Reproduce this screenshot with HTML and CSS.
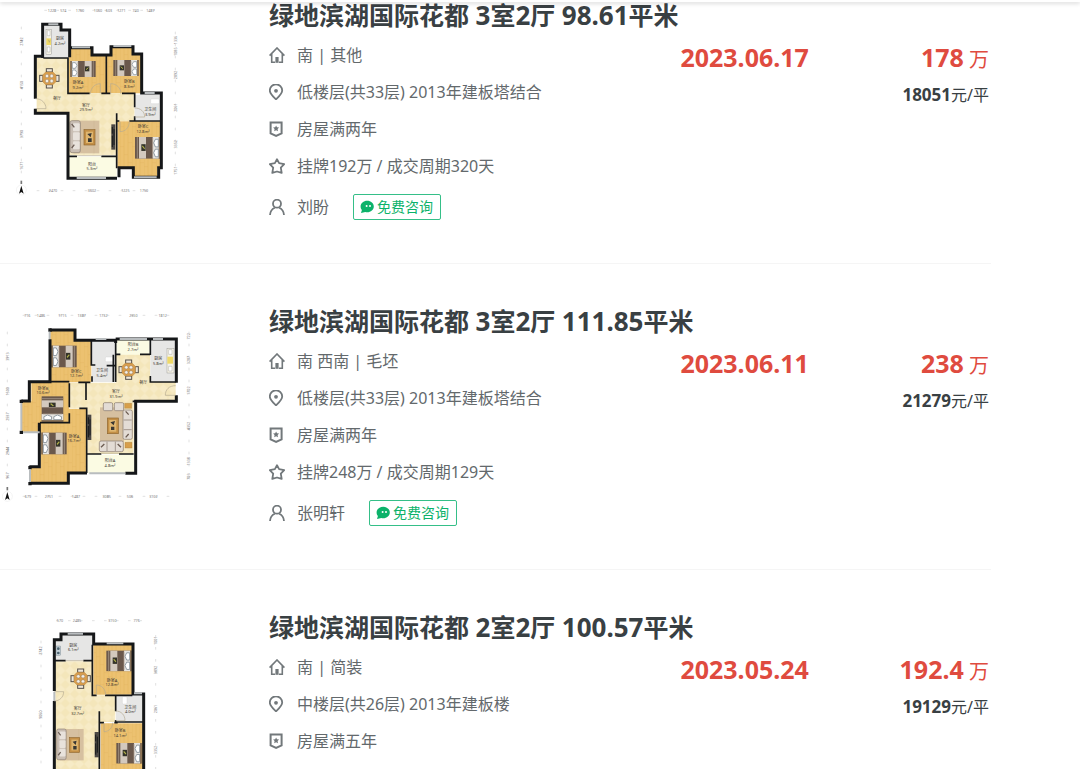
FILE: index.html
```html
<!DOCTYPE html>
<html lang="zh-CN">
<head>
    <meta charset="UTF-8">
    <meta name="viewport" content="width=device-width, initial-scale=1.0">
    <title>绿地滨湖国际花都 成交</title>
    <link rel="stylesheet" href="styles.css">
</head>
<body>
    <!-- Shared icons and furniture -->
    <svg class="defs" width="0" height="0" aria-hidden="true">
        <defs>
            <symbol id="i-house" viewBox="0 0 16 16">
                <path d="M.6 8.6 8 1l7.400 7.600M2.700 7v8.200h3.300M13.300 7v8.200H10" fill="none" stroke="currentColor" stroke-width="1.600"/>
                <path d="M6.400 10h3.200v5.800H6.400z" fill="currentColor"/>
            </symbol>
            <symbol id="i-pin" viewBox="0 0 16 16">
                <path d="M7 15.400C4 12.500.8 9.600.8 6.500a6.200 6.200 0 0 1 12.400 0C13.200 9.600 10 12.500 7 15.400z" fill="none" stroke="currentColor" stroke-width="1.800"/>
                <circle cx="7" cy="6.800" r="1.900" fill="currentColor"/>
            </symbol>
            <symbol id="i-badge" viewBox="0 0 16 16">
                <path d="M1.600 1.500h11v10.800l-5.500 2.500-5.500-2.500z" fill="none" stroke="currentColor" stroke-width="2"/>
                <path d="m7.100 4.400.9 1.900 2.100.3-1.500 1.500.4 2.100-1.900-1-1.900 1 .4-2.100-1.500-1.500 2.100-.3z" fill="currentColor"/>
            </symbol>
            <symbol id="i-star" viewBox="0 0 16 16">
                <path d="m8 1.200 2.100 4 5.100.9-3.400 3.600.9 5.200L8 13.500l-4.700 1.400.9-5.200L.8 6.100l5.100-.9z" fill="none" stroke="currentColor" stroke-width="1.800" stroke-linejoin="round"/>
            </symbol>
            <symbol id="i-person" viewBox="0 0 16 16">
                <circle cx="8" cy="4.700" r="4" fill="none" stroke="currentColor" stroke-width="1.800"/>
                <path d="M1 16c.2-3.600 2-6 4.800-7.300M15 16c-.2-3.600-2-6-4.800-7.300" fill="none" stroke="currentColor" stroke-width="1.800"/>
            </symbol>
            <symbol id="i-chat" viewBox="0 0 14 14">
                <path d="M7.200.7c3.700 0 6.600 2.500 6.600 5.700s-2.900 5.800-6.600 5.800c-.7 0-1.300-.1-1.900-.2L1 12.900l.9-3C1.100 9 .6 7.800.6 6.400.6 3.200 3.500.7 7.200.7z" fill="currentColor"/>
                <circle cx="6.600" cy="6.100" r="1" fill="#fff"/>
                <circle cx="10" cy="6.100" r="1" fill="#fff"/>
            </symbol>

            <pattern id="wood" width="36" height="60" patternUnits="userSpaceOnUse">
                <rect width="36" height="60" fill="#ecc170"/>
                <path d="M0 0v60M12 0v60M24 0v60" stroke="#e6b661" stroke-width="2"/>
                <path d="M0 20h12M12 44h12M24 8h12" stroke="#e2b05a"/>
            </pattern>
            <pattern id="tile" width="28" height="28" patternUnits="userSpaceOnUse">
                <rect width="28" height="28" fill="#f4e6ba"/>
                <path d="M0 14 14 0l14 14-14 14z" fill="#f7ebc6"/>
            </pattern>
            <g id="bed">
                <rect width="76" height="48" fill="#6a584c"/>
                <rect width="5" height="48" fill="#8b7358"/>
                <rect x="5" width="18" height="48" fill="#e6e4e0"/>
                <path d="M6 5h9l5 8-5 9H6zM6 27h9l5 8-5 9H6z" fill="#fff" stroke="#77838c" stroke-width="2"/>
                <rect x="43" width="21" height="48" fill="#d3c9be"/>
                <path d="M23 2v44M69 0v48" stroke="#a8988a" stroke-width="2"/>
                <rect x="44" y="16" width="13" height="15" fill="#34332a"/>
                <path d="m47 26 7-6" stroke="#b3b24a" stroke-width="3"/>
            </g>
            <g id="dining">
                <g fill="#eee7da" stroke="#56504a" stroke-width="3">
                    <rect x="22" y="2" width="18" height="10"/>
                    <rect x="22" y="50" width="18" height="10"/>
                    <rect x="2" y="22" width="10" height="18"/>
                    <rect x="50" y="22" width="10" height="18"/>
                </g>
                <path d="M20 12h22l9 9v20l-9 9H20l-9-9V21z" fill="#d89d4d" stroke="#a97837"/>
                <g fill="#f4efe6" stroke="#77706a">
                    <circle cx="24" cy="24" r="5"/><circle cx="38" cy="24" r="5"/>
                    <circle cx="24" cy="39" r="5"/><circle cx="38" cy="39" r="5"/>
                </g>
            </g>
            <g id="lounge">
                <rect x="10" width="78" height="98" fill="#d6c0a0"/>
                <path d="M26 0v98M72 0v98" stroke="#cab08c"/>
                <rect width="31" height="96" rx="6" fill="#c9beb4" stroke="#8a7b70" stroke-width="2"/>
                <rect x="9" y="8" width="20" height="24" rx="3" fill="#e8e2dc"/>
                <rect x="9" y="35" width="20" height="24" rx="3" fill="#e8e2dc"/>
                <rect x="9" y="62" width="20" height="24" rx="3" fill="#e8e2dc"/>
                <path d="m5 10 8 10M5 82l8-10" stroke="#6f6058" stroke-width="4"/>
                <rect x="42" y="27" width="33" height="46" fill="#c38f46" stroke="#8f6730" stroke-width="2"/>
                <rect x="48" y="33" width="21" height="34" fill="#dfb670"/>
                <path d="m52 40 13-3-3 13zM54 53h11v11H54z" fill="#393733"/>
            </g>
            <g id="tv">
                <rect width="12" height="76" fill="#4b4744"/>
                <path d="M3 8v20M3 34v34M8 14v48" stroke="#17191b" stroke-width="3"/>
            </g>
            <g id="north">
                <circle r="15" fill="#fff" stroke="#ddd"/>
                <path d="M0-13 7 11 0 6-7 11z" fill="#111"/>
                <path d="M0-28v10" stroke="#777" stroke-width="5"/>
            </g>
        </defs>
    </svg>

    <header class="topbar"></header>

    <main class="list">
        <article class="item">
            <a class="plan" href="#" aria-label="户型图">
                <svg viewBox="0 3 600 600">
                    <g fill="url(#wood)">
                        <path d="M206 145h70v22h42v113H206zM332 140h64v22h28v118H320V166h12zM352 364h128v140h-8v28h-76v-28h-44z"/>
                    </g>
                    <path d="M110 174h94v106h146v0h54v83h-52v103H206V336h-96z" fill="url(#tile)"/>
                    <path d="M134 76h46v17h26v79h-72zM404 284h78v77h-78z" fill="#e6e6e5"/>
                    <path d="M206 470h144v60H206z" fill="#fbfbe3"/>
                    <rect x="138" y="88" width="16" height="75" fill="#f5f2e6" stroke="#777"/>
                    <path d="M139 115h14v20h-14z" fill="#efd968"/>
                    <path d="M142 92h8v15h-8zM142 141h8v15h-8z" fill="#fff" stroke="#888"/>
                    <path d="m145 119 3 8 2-6" fill="none" stroke="#777"/>
                    <rect x="452" y="297" width="26" height="14" rx="3" fill="#fff" stroke="#c7c7c7"/>
                    <use href="#dining" x="117" y="204"/>
                    <use href="#bed" x="211" y="183"/>
                    <use href="#bed" transform="matrix(-1 0 0 1 416 180)"/>
                    <use href="#bed" transform="matrix(-1 0 0 1.350 481 411)"/>
                    <use href="#lounge" x="210" y="362"/>
                    <use href="#tv" x="334" y="373"/>
                    <g class="wall">
                        <path d="M128 174V73h55v17h26v82M106 296V169h22M106 326v14h98v195h147M209 143h67v22h57v-25h66v22h26v117h59v224h-8v29h-76v-29h-43v29"/>
                        <path class="thin" d="M130 174h74v106h65M304 280h27M319 165v115M366 280h38v42M404 349v14h76M350 340v165M206 469h25M304 469h46M350 363h8M388 363h18"/>
                    </g>
                    <path class="glass" d="M145 73h30M216 142h54M340 138h54M434 279h30M230 534h88M402 532h68"/>
                    <path class="door" d="M106 296c20 0 32 14 32 30h-32M271 282c1-18 13-31 30-31v29M332 282v-31c18 0 31 13 31 31M404 324c18 0 30 11 30 27h-30M388 365c0 17-12 30-28 30v-30M230 467h74"/>
                    <g class="room">
                        <text x="180" y="120">厨房</text><text x="180" y="134">4.2m²</text>
                        <text x="234" y="253">卧室A</text><text x="234" y="267">9.2m²</text>
                        <text x="388" y="249">卧室B</text><text x="388" y="263">8.3m²</text>
                        <text x="171" y="301">餐厅</text><text x="258" y="320">客厅</text><text x="258" y="334">29.9m²</text>
                        <text x="451" y="334">卫生间</text><text x="451" y="347">3.9m²</text>
                        <text x="429" y="385">卧室C</text><text x="429" y="398">12.8m²</text>
                        <text x="276" y="497">阳台</text><text x="276" y="510">5.3m²</text>
                    </g>
                    <path class="rule" d="M133 31h348M64 80v450M526 95v430M110 572h358"/>
                    <g class="dim">
                        <text x="156" y="35">1228</text><text x="190" y="35">574</text><text x="240" y="35">1760</text><text x="294" y="35">1060</text><text x="327" y="35">603</text><text x="364" y="35">1271</text><text x="407" y="35">740</text><text x="451" y="35">1487</text>
                        <text x="159" y="576">2470</text><text x="276" y="576">3602</text><text x="376" y="576">1225</text><text x="432" y="576">1750</text>
                        <text transform="translate(68 125) rotate(-90)">2742</text><text transform="translate(68 255) rotate(-90)">4150</text><text transform="translate(68 402) rotate(-90)">3790</text><text transform="translate(68 497) rotate(-90)">1671</text>
                        <text transform="translate(530 120) rotate(-90)">1336</text><text transform="translate(530 155) rotate(-90)">1085</text><text transform="translate(530 225) rotate(-90)">2892</text><text transform="translate(530 323) rotate(-90)">2061</text><text transform="translate(530 433) rotate(-90)">3352</text><text transform="translate(530 512) rotate(-90)">1751</text>
                    </g>
                    <use href="#north" x="64" y="570"/>
                </svg>
            </a>
            <div class="content">
                <h2><a href="#">绿地滨湖国际花都 <b>3</b>室<b>2</b>厅 <b>98.61</b>平米</a></h2>
                <div class="details">
                    <div class="info">
                        <p><svg class="icon"><use href="#i-house"/></svg>南 | 其他</p>
                        <p><svg class="icon"><use href="#i-pin"/></svg>低楼层(共33层) 2013年建板塔结合</p>
                        <p><svg class="icon"><use href="#i-badge"/></svg>房屋满两年</p>
                        <p><svg class="icon"><use href="#i-star"/></svg>挂牌192万 / 成交周期320天</p>
                        <div class="agent">
                            <svg class="icon"><use href="#i-person"/></svg><a href="#">刘盼</a>
                            <button type="button"><svg><use href="#i-chat"/></svg>免费咨询</button>
                        </div>
                    </div>
                    <div class="deal">
                        <div class="date">2023.06.17</div>
                        <div class="price">
                            <div class="total"><b>178</b> 万</div>
                            <div class="unit"><b>18051</b>元/平</div>
                        </div>
                    </div>
                </div>
            </div>
        </article>

        <article class="item">
            <a class="plan" href="#" aria-label="户型图">
                <svg viewBox="0 21 600 600">
                    <path d="M150 90h74v32h50v125h-66v80h50v190h-52v33H90v-46h32V396H64v-92h30v-58h58z" fill="url(#wood)"/>
                    <path d="M348 162h103v83h76v59H401v158H262V326h-52v-78h138z" fill="url(#tile)"/>
                    <path d="M276 120h70v126h-70zM451 120h76v124h-76z" fill="#e6e6e5"/>
                    <path d="M349 120h100v44H349zM262 464h140v56H262z" fill="#fbfbe3"/>
                    <rect x="316" y="171" width="25" height="14" rx="3" fill="#fff" stroke="#c7c7c7"/>
                    <rect x="501" y="145" width="21" height="74" fill="#f5f2e6" stroke="#777"/>
                    <path d="M502 170h17v21h-17z" fill="#efd968"/>
                    <path d="M506 149h10v14h-10zM506 199h10v14h-10z" fill="#fff" stroke="#888"/>
                    <use href="#dining" x="355" y="178"/>
                    <use href="#bed" transform="matrix(1 0 0 1.350 154 137)"/>
                    <use href="#bed" transform="matrix(1 0 0 1.350 124 398)"/>
                    <use href="#bed" transform="matrix(0 -1 1.350 0 125 365)"/>
                    <rect x="300" y="322" width="72" height="104" fill="#d6c0a0"/>
                    <rect x="322" y="354" width="33" height="47" fill="#c38f46" stroke="#8f6730" stroke-width="2"/>
                    <rect x="328" y="360" width="21" height="35" fill="#dfb670"/>
                    <path d="m331 367 14-4-4 13zM333 380h10v10h-10z" fill="#393733"/>
                    <g fill="#e3dcd5" stroke="#84766b" stroke-width="2">
                        <rect x="310" y="308" width="28" height="24" rx="4"/>
                        <rect x="343" y="308" width="28" height="24" rx="4"/>
                        <rect x="369" y="330" width="28" height="88" rx="5"/>
                        <rect x="298" y="423" width="72" height="32" rx="5"/>
                        <path d="M371 360h24M371 389h24M321 425v28M346 425v28"/>
                    </g>
                    <path d="M374 310h21v15h-21zM375 427h21v17h-21z" fill="#d79f4a" stroke="#9f7536"/>
                    <path d="m377 334 9 10M377 412l9-10M303 442l10-10M363 442l-10-10" stroke="#6b5b51" stroke-width="4"/>
                    <use href="#tv" x="262" y="344"/>
                    <g class="wall">
                        <path d="M150 90h75v31h122M150 118v127H88v58H64M118 368v132H88M90 550h115v-31h56M347 117h101M440 117h89v131M529 286v18H407v216H376M347 117v12"/>
                        <path class="thin" d="M274 122v73h12M340 164v82M320 197h27M276 245v-16M347 122v124M451 120v45M451 228v18h76M349 163h12M420 163h30M258 250v50M208 250v72M208 340v28h-88M235 247h36M238 325h22v194M262 462h42M357 462h44M398 304h10M150 245h58"/>
                    </g>
                    <g class="corner"><path d="M145 85h10v10h-10zM59 299h10v10H59zM59 392h10v10H59zM85 498h10v10H85zM85 546h10v10H85z"/></g>
                    <path class="glass" d="M149 95v22M64 309v83M69 397h50M90 508v38M287 117h32M359 117h82M459 117h30M268 520h108"/>
                    <path class="door" d="M527 257c-20 0-31 12-31 29h31M304 460h53"/>
                    <g class="room">
                        <text x="229" y="219">卧室C</text><text x="229" y="232">12.1m²</text>
                        <text x="306" y="217">卫生间</text><text x="306" y="230">5.4m²</text>
                        <text x="399" y="139">阳台B</text><text x="399" y="152">2.7m²</text>
                        <text x="475" y="181">厨房</text><text x="475" y="194">5.8m²</text>
                        <text x="430" y="251">餐厅</text><text x="348" y="279">客厅</text><text x="348" y="293">31.9m²</text>
                        <text x="129" y="269">卧室B</text><text x="129" y="282">10.6m²</text>
                        <text x="222" y="413">卧室A</text><text x="222" y="426">16.7m²</text>
                        <text x="330" y="487">阳台A</text><text x="330" y="500">4.8m²</text>
                    </g>
                    <path class="rule" d="M68 46h457M22 95v460M567 95v450M68 589h454"/>
                    <g class="dim">
                        <text x="82" y="50">716</text><text x="123" y="50">1486</text><text x="187" y="50">1715</text><text x="245" y="50">1387</text><text x="310" y="50">1732</text><text x="400" y="50">2350</text><text x="488" y="50">1812</text>
                        <text x="84" y="593">679</text><text x="147" y="593">2751</text><text x="228" y="593">1487</text><text x="320" y="593">3085</text><text x="390" y="593">506</text><text x="460" y="593">3102</text>
                        <text transform="translate(26 170) rotate(-90)">3913</text><text transform="translate(26 274) rotate(-90)">1500</text><text transform="translate(26 350) rotate(-90)">2537</text><text transform="translate(26 453) rotate(-90)">2944</text><text transform="translate(26 527) rotate(-90)">967</text>
                        <text transform="translate(571 109) rotate(-90)">722</text><text transform="translate(571 180) rotate(-90)">3287</text><text transform="translate(571 272) rotate(-90)">1702</text><text transform="translate(571 378) rotate(-90)">4352</text><text transform="translate(571 484) rotate(-90)">1338</text><text transform="translate(571 530) rotate(-90)">703</text>
                    </g>
                    <use href="#north" x="22" y="589"/>
                </svg>
            </a>
            <div class="content">
                <h2><a href="#">绿地滨湖国际花都 <b>3</b>室<b>2</b>厅 <b>111.85</b>平米</a></h2>
                <div class="details">
                    <div class="info">
                        <p><svg class="icon"><use href="#i-house"/></svg>南 西南 | 毛坯</p>
                        <p><svg class="icon"><use href="#i-pin"/></svg>低楼层(共33层) 2013年建板塔结合</p>
                        <p><svg class="icon"><use href="#i-badge"/></svg>房屋满两年</p>
                        <p><svg class="icon"><use href="#i-star"/></svg>挂牌248万 / 成交周期129天</p>
                        <div class="agent">
                            <svg class="icon"><use href="#i-person"/></svg><a href="#">张明轩</a>
                            <button type="button"><svg><use href="#i-chat"/></svg>免费咨询</button>
                        </div>
                    </div>
                    <div class="deal">
                        <div class="date">2023.06.11</div>
                        <div class="price">
                            <div class="total"><b>238</b> 万</div>
                            <div class="unit"><b>21279</b>元/平</div>
                        </div>
                    </div>
                </div>
            </div>
        </article>

        <article class="item">
            <a class="plan" href="#" aria-label="户型图">
                <svg viewBox="0 9 600 600">
                    <path d="M280 104h119v150H280zM302 340h127v200H302z" fill="url(#wood)"/>
                    <path d="M166 154h112v102h68v80h-46v204H166z" fill="url(#tile)"/>
                    <path d="M166 92h20V74h90v78H166zM348 256h80v80h-80z" fill="#e6e6e5"/>
                    <rect x="168" y="108" width="14" height="28" fill="#c4d0d7" stroke="#65747c"/>
                    <circle cx="175" cy="116" r="4" fill="#4c6471"/><circle cx="175" cy="129" r="4" fill="#4c6471"/>
                    <rect x="367" y="260" width="14" height="22" rx="3" fill="#fff" stroke="#c7c7c7"/>
                    <use href="#dining" x="211" y="175"/>
                    <use href="#bed" transform="matrix(-1 0 0 1.280 395 122)"/>
                    <use href="#bed" transform="matrix(-1 0 0 1.280 425 399)"/>
                    <use href="#lounge" transform="translate(170 357) scale(.92 .96)"/>
                    <use href="#tv" x="284" y="366"/>
                    <g class="wall">
                        <path d="M163 243V89h20V72h98v30h118v150h32v300M163 273v280"/>
                        <path class="thin" d="M165 152h32M250 152h27v104h13M277 104v50M315 256h32v48M347 330v6h82M298 304v240M298 338h14M343 338h10M345 256h52"/>
                    </g>
                    <path class="glass" d="M203 71h46M320 100h50M402 250h24M163 245v28"/>
                    <path class="door" d="M163 245h28c0 17-13 28-28 28M289 256v-31c16 0 28 12 28 31M347 303c17 0 28 12 28 29h-28M338 338c0 16-12 27-26 27v-27M197 152h53"/>
                    <g class="room">
                        <text x="220" y="111">厨房</text><text x="220" y="124">6.1m²</text>
                        <text x="336" y="215">卧室A</text><text x="336" y="228">12.8m²</text>
                        <text x="233" y="301">客厅</text><text x="233" y="315">32.7m²</text>
                        <text x="391" y="297">卫生间</text><text x="391" y="310">4.0m²</text>
                        <text x="360" y="367">卧室B</text><text x="360" y="380">14.1m²</text>
                    </g>
                    <path class="rule" d="M168 32h258M123 92v410M467 75v430"/>
                    <g class="dim">
                        <text x="180" y="36">570</text><text x="231" y="36">2485</text><text x="337" y="36">3150</text><text x="410" y="36">776</text>
                        <text transform="translate(127 122) rotate(-90)">2742</text><text transform="translate(127 314) rotate(-90)">9050</text>
                        <text transform="translate(471 92) rotate(-90)">1001</text><text transform="translate(471 180) rotate(-90)">3892</text><text transform="translate(471 297) rotate(-90)">2061</text><text transform="translate(471 420) rotate(-90)">3352</text>
                    </g>
                </svg>
            </a>
            <div class="content">
                <h2><a href="#">绿地滨湖国际花都 <b>2</b>室<b>2</b>厅 <b>100.57</b>平米</a></h2>
                <div class="details">
                    <div class="info">
                        <p><svg class="icon"><use href="#i-house"/></svg>南 | 简装</p>
                        <p><svg class="icon"><use href="#i-pin"/></svg>中楼层(共26层) 2013年建板楼</p>
                        <p><svg class="icon"><use href="#i-badge"/></svg>房屋满五年</p>
                    </div>
                    <div class="deal">
                        <div class="date">2023.05.24</div>
                        <div class="price">
                            <div class="total"><b>192.4</b> 万</div>
                            <div class="unit"><b>19129</b>元/平</div>
                        </div>
                    </div>
                </div>
            </div>
        </article>
    </main>
</body>
</html>
```
FILE: styles.css
```css
* {
    box-sizing: border-box;
}

body {
    margin: 0;
    height: 100vh;
    overflow: hidden;
    background: #fff;
    color: #394043;
    font-family: "Noto Sans", "Noto Sans CJK SC", sans-serif;
    font-size: 16px;
    line-height: 26px;
}

h2, p {
    margin: 0;
}

a {
    color: inherit;
    text-decoration: none;
}

b {
    font-weight: 700;
}

.defs {
    display: block;
}

/* Bottom edge of the sticky header, lies over the list */
.topbar {
    position: fixed;
    top: 0;
    left: 0;
    right: 0;
    height: 2px;
    background: #fff;
    box-shadow: 0 1px 4px rgba(0, 0, 0, 0.25);
}

.list {
    margin-right: 89px;
}

.item {
    display: flex;
    gap: 69px;
    padding: 43px 2px 43px 0;
    border-bottom: 1px solid #f5f5f5;
}

.item:first-child {
    padding-top: 1px;
}

.plan {
    flex: none;
    width: 200px;
    height: 200px;
}

.plan svg {
    display: block;
    width: 100%;
    height: 100%;
}

.content {
    flex: 1;
}

h2 {
    margin-bottom: 13px;
    font-size: 25px;
    line-height: 28px;
    font-weight: 700;
}

h2 b {
    font-size: 26px;
    line-height: 1;
}

.details {
    display: grid;
    grid-template-columns: 4fr 3fr;
}

.info {
    display: flex;
    flex-direction: column;
    gap: 11px;
    color: #63696c;
}

.info p, .agent {
    display: flex;
    align-items: center;
    gap: 12px;
}

.icon {
    flex: none;
    width: 16px;
    height: 16px;
    color: #72787b;
}

.agent {
    margin-top: 4px;
}

button {
    display: flex;
    align-items: center;
    gap: 3px;
    height: 26px;
    margin-left: 12px;
    padding: 0 7px 0 6px;
    border: 1px solid #35bf88;
    border-radius: 2px;
    background: #fff;
    color: #0cb26a;
    font-family: inherit;
    font-size: 14px;
    line-height: 24px;
    cursor: pointer;
}

button svg {
    width: 14px;
    height: 14px;
}

.deal {
    display: flex;
    justify-content: space-between;
    color: #df4b3f;
}

.date, .total b {
    font-size: 25px;
    font-weight: 700;
}

.date, .total {
    line-height: 30px;
}

.total {
    font-size: 20px;
}

.price {
    text-align: right;
}

.unit {
    margin-top: 7px;
    color: #394043;
}

.unit b {
    font-size: 17px;
}

/* Floor plans */
.wall path {
    fill: none;
    stroke: #151719;
    stroke-width: 9;
}

.wall .thin {
    stroke-width: 5;
}

.corner {
    fill: #151719;
}

.glass {
    fill: none;
    stroke: #b9bdbf;
    stroke-width: 6;
}

.door {
    fill: none;
    stroke: #b5aa93;
    stroke-width: 2;
}

.rule {
    stroke: #d2d2d2;
    stroke-width: 2;
    stroke-dasharray: 8 28;
}

.room, .dim {
    fill: #3c3832;
    font-size: 12px;
    text-anchor: middle;
}

.dim {
    fill: #777;
    font-size: 11px;
}
```
